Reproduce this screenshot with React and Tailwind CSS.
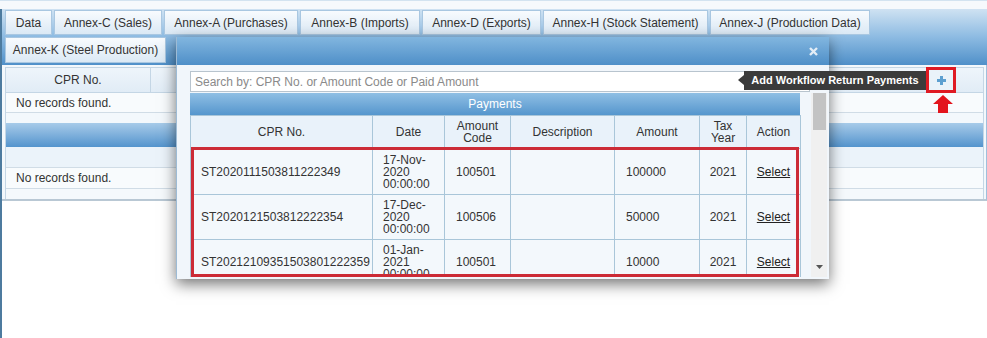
export default function App() {
  const tabs1 = [
    ["Data", 47],
    ["Annex-C (Sales)", 108],
    ["Annex-A (Purchases)", 134],
    ["Annex-B (Imports)", 120],
    ["Annex-D (Exports)", 119],
    ["Annex-H (Stock Statement)", 165],
    ["Annex-J (Production Data)", 160],
  ];
  const rows = [
    { cpr: "ST2020111503811222349", d: ["17-Nov-", "2020", "00:00:00"], code: "100501", amt: "100000", yr: "2021", h: "h-[46px]" },
    { cpr: "ST2020121503812222354", d: ["17-Dec-", "2020", "00:00:00"], code: "100506", amt: "50000", yr: "2021", h: "h-[45px]" },
    { cpr: "ST20212109351503801222359", d: ["01-Jan-", "2021", "00:00:00"], code: "100501", amt: "10000", yr: "2021", h: "h-[45px]" },
  ];
  const tab =
    "flex items-center justify-center bg-gradient-to-b from-[#f8fbfe] to-[#dbe9f5] border border-[#a9c7e1] text-[12px] text-[#333]";
  return (
    <div className="relative w-[987px] h-[338px] overflow-hidden bg-white font-['Liberation_Sans',Arial,sans-serif] text-[12px] text-[#333]">
      {/* top strip */}
      <div className="h-[9px] bg-[#f6f9fc] border-t border-[#d3e3f0]" />
      {/* main panel */}
      <div className="border-l-[2px] border-[#4d7b9f] h-[329px]">
        <div className="bg-gradient-to-b from-[#cfe2f2] via-[#8dbbe2] to-[#4f90c9] pt-px pl-[3px]">
          <div className="flex gap-[2px]">
            {tabs1.map(([t, w]) => (
              <div key={t} className={tab + " h-[25px]"} style={{ width: w }}>
                {t}
              </div>
            ))}
          </div>
          <div className="flex mt-[2px] pb-[2px]">
            <div className={tab + " h-[26px] w-[161px]"}>Annex-K (Steel Production)</div>
          </div>
        </div>
        {/* content */}
        <div className="bg-[#f3f8fc] pt-[2px] pl-[3px] pr-[2px] border-r border-[#9fc0dc] border-b-[2px] border-b-[#b9c8d4]">
          <div className="border-l border-r border-[#c4d6e5]">
            <div className="flex h-[26px] bg-gradient-to-b from-[#eef5fb] to-[#e1ecf6] border-y border-[#c4d6e5]">
              <div className="w-[145px] flex items-center justify-center border-r border-[#c4d6e5]">CPR No.</div>
              <div className="flex-1" />
            </div>
            <div className="h-[20px] flex items-center pl-[10px] bg-[#f8fbfd] border-b border-[#d0dce6]">No records found.</div>
            <div className="h-[10px]" />
            <div className="h-[24px] bg-gradient-to-b from-[#a7cbe9] to-[#5394cd]" />
            <div className="h-[21px] bg-[#ebf3fa] border-b border-[#d0dce6]" />
            <div className="h-[21px] flex items-center pl-[10px] bg-[#f8fbfd] border-b border-[#d0dce6]">No records found.</div>
            <div className="h-[10px] bg-[#f5f9fc]" />
          </div>
        </div>
      </div>

      {/* plus button + tooltip + arrow (annotation overlay) */}
      <div className="absolute left-[926px] top-[67px] w-[30px] h-[26px] border-[3px] border-[#df1a23] bg-[#eaf2f9] flex items-center justify-center">
        <svg width="11" height="11" viewBox="0 0 11 11">
          <path d="M5.5 1v9M1 5.5h9" stroke="#5d9fd0" strokeWidth="3" />
        </svg>
      </div>
      <svg className="absolute left-[933px] top-[95px]" width="20" height="18" viewBox="0 0 20 18">
        <polygon points="10,0 20,9 15,9 15,18 5,18 5,9 0,9" fill="#e3141d" />
      </svg>

      {/* modal */}
      <div className="absolute left-[176px] top-[37px] w-[653px] h-[242px] bg-[#f1f6fb] border-l border-[#9dbbd5] shadow-[0_5px_14px_rgba(0,0,0,0.55)]">
        <div className="h-[28px] bg-gradient-to-b from-[#82b6df] to-[#4e8fc8] flex items-center justify-end pr-[11px]">
          <svg width="9" height="9" viewBox="0 0 9 9">
            <path d="M1 1l7 7M8 1l-7 7" stroke="#e4edf6" strokeWidth="2.4" />
          </svg>
        </div>
        <div className="pl-[13px] pt-[6px]">
          <div className="w-[620px] h-[21px] bg-white border border-[#b8c4ce] flex items-center pl-[4px] text-[#8a8a8a]">
            Search by: CPR No. or Amount Code or Paid Amount
          </div>
          <div className="relative mt-px h-[184px] w-[637px] overflow-hidden flex">
            <div className="relative w-[610px]">
              <div className="h-[22px] bg-gradient-to-b from-[#8fbfe4] to-[#5596cd] flex items-center justify-center text-white">
                Payments
              </div>
              <table className="w-[610px] table-fixed border-collapse">
                <colgroup>
                  <col className="w-[182px]" />
                  <col className="w-[72px]" />
                  <col className="w-[66px]" />
                  <col className="w-[104px]" />
                  <col className="w-[85px]" />
                  <col className="w-[47px]" />
                  <col className="w-[54px]" />
                </colgroup>
                <thead>
                  <tr className="h-[33px] bg-[#e9f2fa] leading-[12px]">
                    <th className="font-normal border border-[#a9c6d9]">CPR No.</th>
                    <th className="font-normal border border-[#a9c6d9]">Date</th>
                    <th className="font-normal border border-[#a9c6d9]">Amount<br />Code</th>
                    <th className="font-normal border border-[#a9c6d9]">Description</th>
                    <th className="font-normal border border-[#a9c6d9]">Amount</th>
                    <th className="font-normal border border-[#a9c6d9]">Tax<br />Year</th>
                    <th className="font-normal border border-[#a9c6d9]">Action</th>
                  </tr>
                </thead>
                <tbody>
                  {rows.map((r) => (
                    <tr key={r.cpr} className={r.h + " bg-[#f3f8fc]"}>
                      <td className="border border-[#a9c6d9] pl-[10px]">{r.cpr}</td>
                      <td className="border border-[#a9c6d9] pl-[10px] leading-[12px]">
                        {r.d[0]}<br />{r.d[1]}<br />{r.d[2]}
                      </td>
                      <td className="border border-[#a9c6d9] pl-[11px]">{r.code}</td>
                      <td className="border border-[#a9c6d9]" />
                      <td className="border border-[#a9c6d9] pl-[11px]">{r.amt}</td>
                      <td className="border border-[#a9c6d9] text-center">{r.yr}</td>
                      <td className="border border-[#a9c6d9] text-center">
                        <span className="underline text-[#222]">Select</span>
                      </td>
                    </tr>
                  ))}
                </tbody>
              </table>
              <div className="absolute left-px top-[54px] w-[608px] bottom-0 border-[3px] border-[#cc2b36]" />
            </div>
            <div className="w-[11px]" />
            {/* fake scrollbar */}
            <div className="w-[16px] bg-[#f0f0f0] flex flex-col items-center">
              <div className="w-[13px] h-[37px] bg-[#c3c3c3] mt-0" />
              <div className="flex-1" />
              <svg className="mb-[8px]" width="7" height="4" viewBox="0 0 7 4">
                <polygon points="0,0 7,0 3.5,4" fill="#555" />
              </svg>
            </div>
          </div>
        </div>
      </div>

      {/* tooltip */}
      <div className="absolute left-[744px] top-[71px] w-[182px] h-[19px] bg-[#3b3b3b] text-white text-[11px] font-bold flex items-center justify-center">
        <div className="absolute left-[-6px] top-[4px] w-0 h-0 border-y-[5px] border-y-transparent border-r-[6px] border-r-[#3b3b3b]" />
        Add Workflow Return Payments
      </div>
    </div>
  );
}
